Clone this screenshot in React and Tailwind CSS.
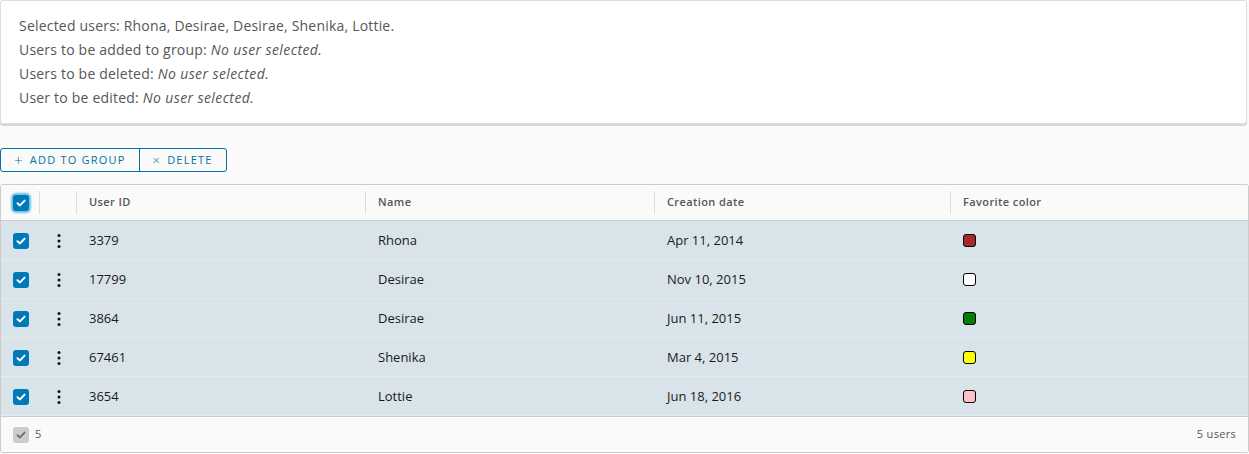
import React from "react";

const rows = [
  { id: "3379", name: "Rhona", date: "Apr 11, 2014", color: "#a52a2a" },
  { id: "17799", name: "Desirae", date: "Nov 10, 2015", color: "#ffffff" },
  { id: "3864", name: "Desirae", date: "Jun 11, 2015", color: "#008000" },
  { id: "67461", name: "Shenika", date: "Mar 4, 2015", color: "#ffff00" },
  { id: "3654", name: "Lottie", date: "Jun 18, 2016", color: "#ffc0cb" },
];

function Check({ gray = false, focus = false }) {
  return (
    <div
      className={
        "w-4 h-4 rounded-[3px] flex items-center justify-center " +
        (gray ? "bg-[#cccccc]" : "bg-[#0079b8]") +
        (focus ? " shadow-[0_0_2px_2px_#6bc1e3]" : "")
      }
    >
      <svg width="10" height="8" viewBox="0 0 10 8">
        <path
          d="M1.5 4.2 L4 6.4 L8.6 1.6"
          fill="none"
          stroke={gray ? "#737373" : "#ffffff"}
          strokeWidth="2"
          strokeLinecap="round"
          strokeLinejoin="round"
        />
      </svg>
    </div>
  );
}

function Kebab() {
  return (
    <svg width="4" height="16" viewBox="0 0 4 16">
      <circle cx="2" cy="2.5" r="1.5" fill="#111" />
      <circle cx="2" cy="8" r="1.5" fill="#111" />
      <circle cx="2" cy="13.5" r="1.5" fill="#111" />
    </svg>
  );
}

export default function App() {
  return (
    <div
      className="w-[1249px] h-[454px] bg-[#fafafa] text-[#565656] overflow-hidden"
      style={{ fontFamily: '"Open Sans", "Noto Sans", sans-serif' }}
    >
      <div className="w-[1247px] h-[124px] bg-white border border-[#dddddd] rounded-[3px] shadow-[0_2px_0_0_#d7d7d7] pt-[13px] pl-[18px] text-[14px] leading-[24px] tracking-[0.2px]">
        <div>Selected users: Rhona, Desirae, Desirae, Shenika, Lottie.</div>
        <div>
          Users to be added to group: <i className="tracking-[0.4px]">No user selected.</i>
        </div>
        <div>
          Users to be deleted: <i className="tracking-[0.4px]">No user selected.</i>
        </div>
        <div>
          User to be edited: <i className="tracking-[0.4px]">No user selected.</i>
        </div>
      </div>

      <div className="mt-[24px] flex">
        <div className="flex h-[24px] border border-[#0072a3] rounded-[3px] text-[#0072a3] text-[11px] font-medium tracking-[0.11em]">
          <div className="flex items-center gap-[6px] px-[13px] border-r border-[#0072a3]">
            <span className="text-[15px] font-light leading-none">+</span>
            <span>ADD TO GROUP</span>
          </div>
          <div className="flex items-center gap-[6px] px-[13px]">
            <span className="text-[13px] font-light leading-none">×</span>
            <span>DELETE</span>
          </div>
        </div>
      </div>

      <div className="mt-[12px] w-[1249px] border border-[#cccccc] rounded-[3px] overflow-hidden bg-white">
        <div className="flex h-[36px] bg-[#fafafa] border-b border-[#cccccc] text-[11px] font-semibold text-[#565656] tracking-[0.4px]">
          <div className="w-[38px] flex items-center pl-[12px]">
            <Check focus />
          </div>
          <div className="w-[37px] flex items-center">
            <div className="w-px h-[23px] bg-[#dddddd]" />
          </div>
          {[
            ["User ID", "w-[289px]"],
            ["Name", "w-[289px]"],
            ["Creation date", "w-[296px]"],
            ["Favorite color", "flex-1"],
          ].map(([label, w]) => (
            <div key={label} className={w + " flex items-center"}>
              <div className="w-px h-[23px] bg-[#dddddd]" />
              <span className="pl-[12px]">{label}</span>
            </div>
          ))}
        </div>
        {rows.map((r) => (
          <div
            key={r.id}
            className="flex h-[39px] bg-[#d9e4ea] border-b border-[#e4e9ec] text-[13px] text-[#1a1a1a] items-center pt-[1px]"
          >
            <div className="w-[38px] pl-[12px]">
              <Check />
            </div>
            <div className="w-[37px] pl-[18px] flex items-center">
              <Kebab />
            </div>
            <div className="w-[289px] pl-[13px]">{r.id}</div>
            <div className="w-[289px] pl-[13px]">{r.name}</div>
            <div className="w-[296px] pl-[13px]">{r.date}</div>
            <div className="flex-1 pl-[13px]">
              <div
                className="w-[13px] h-[13px] rounded-[3px] border border-black"
                style={{ backgroundColor: r.color }}
              />
            </div>
          </div>
        ))}
        <div className="flex h-[36px] items-center justify-between bg-[#fafafa] border-t border-[#cccccc] text-[11px] text-[#565656] pl-[12px] pr-[12px] tracking-[0.3px]">
          <div className="flex items-center gap-[6px]">
            <Check gray />
            <span>5</span>
          </div>
          <span>5 users</span>
        </div>
      </div>
    </div>
  );
}
